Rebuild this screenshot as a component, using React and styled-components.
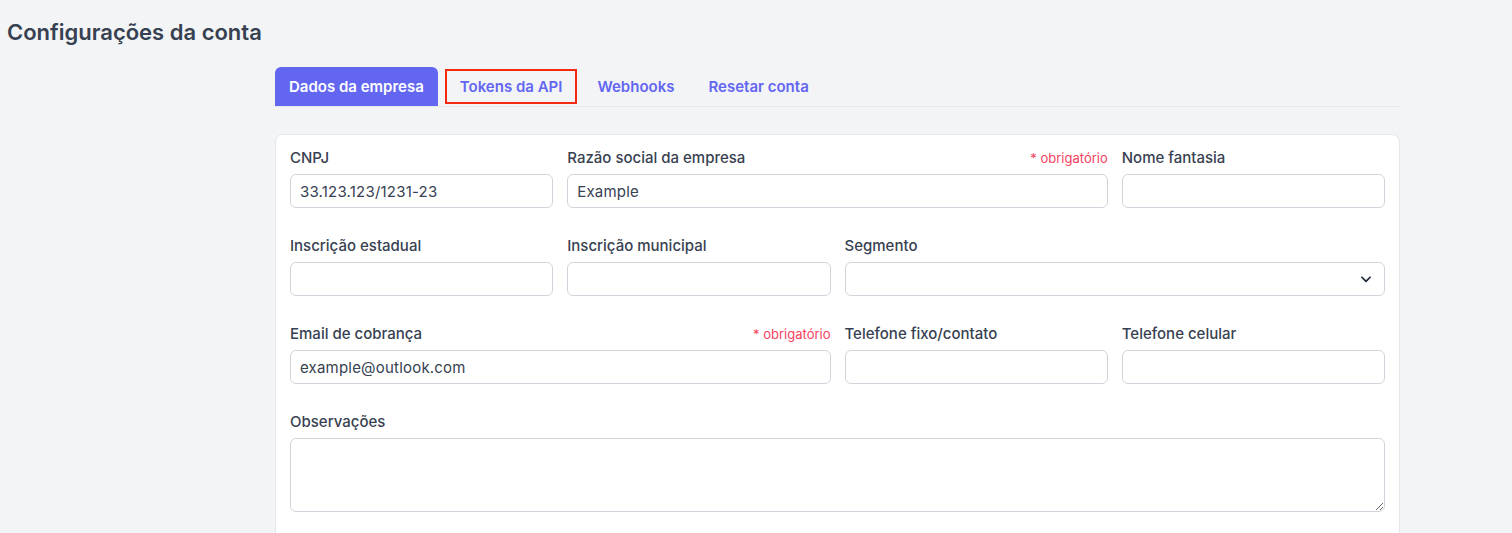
import React from "react";
import styled, { createGlobalStyle } from "styled-components";

const Global = createGlobalStyle`
  body {
    margin: 0;
    background: #f3f4f6;
    font-family: Inter, "Noto Sans", sans-serif;
    color: #374151;
  }
`;

const Page = styled.div`
  padding: 18px 7px 0;
`;

const Title = styled.h1`
  margin: 0;
  font-size: 22px;
  line-height: 28px;
  font-weight: 600;
  color: #374151;
`;

const Content = styled.div`
  margin: 21px 0 0 268px;
  width: 1125px;
`;

const TabBar = styled.div`
  display: flex;
  align-items: flex-start;
  gap: 6px;
  border-bottom: 1px solid #e5e7eb;
`;

const Tab = styled.button`
  box-sizing: border-box;
  height: ${(p) => (p.$marked ? "35px" : "39px")};
  margin: ${(p) => (p.$marked ? "2px 0 2px 1px" : "0")};
  padding: 0 ${(p) => (p.$marked ? "13px" : "14px")};
  border: ${(p) => (p.$marked ? "2px solid #f5290f" : "none")};
  border-radius: ${(p) => (p.$marked ? "0" : "6px 6px 0 0")};
  background: ${(p) => (p.$active ? "#6366f1" : "transparent")};
  color: ${(p) => (p.$active ? "#fff" : "#6366f1")};
  font-family: inherit;
  font-size: 15px;
  font-weight: 600;
  cursor: pointer;
`;

const Card = styled.div`
  margin-top: 27px;
  background: #fff;
  border: 1px solid #e5e7eb;
  border-radius: 8px;
  padding: 13px 14px 40px;
`;

const Grid = styled.div`
  display: grid;
  grid-template-columns: repeat(4, 1fr);
  column-gap: 14px;
  row-gap: 28px;
`;

const Field = styled.div`
  grid-column: span ${(p) => p.$span || 1};
  display: flex;
  flex-direction: column;
  gap: 6px;
`;

const LabelRow = styled.div`
  display: flex;
  justify-content: space-between;
  align-items: baseline;
  height: 20px;
`;

const Label = styled.label`
  font-size: 15px;
  line-height: 20px;
  font-weight: 500;
  color: #374151;
`;

const Required = styled.span`
  font-size: 13px;
  color: #f43f5e;
`;

const Input = styled.input`
  box-sizing: border-box;
  height: 34px;
  width: 100%;
  padding: 0 9px;
  border: 1px solid #d1d5db;
  border-radius: 6px;
  font-family: inherit;
  font-size: 15px;
  letter-spacing: 0.2px;
  color: #374151;
  background: #fff;
  outline: none;
`;

const SelectWrap = styled.div`
  position: relative;
`;

const Select = styled.select`
  box-sizing: border-box;
  height: 34px;
  width: 100%;
  padding: 0 10px;
  border: 1px solid #d1d5db;
  border-radius: 6px;
  background: #fff;
  appearance: none;
  font-family: inherit;
  font-size: 15px;
  outline: none;
`;

const Chevron = styled.svg`
  position: absolute;
  right: 12px;
  top: 10px;
  pointer-events: none;
`;

const TextArea = styled.textarea`
  box-sizing: border-box;
  width: 100%;
  height: 74px;
  padding: 8px 10px;
  border: 1px solid #d1d5db;
  border-radius: 6px;
  font-family: inherit;
  font-size: 15px;
  outline: none;
`;

const TextField = ({ label, required, span, value }) => (
  <Field $span={span}>
    <LabelRow>
      <Label>{label}</Label>
      {required && <Required>* obrigatório</Required>}
    </LabelRow>
    <Input defaultValue={value} />
  </Field>
);

export default function App() {
  return (
    <Page>
      <Global />
      <Title>Configurações da conta</Title>
      <Content>
        <TabBar>
          <Tab $active>Dados da empresa</Tab>
          <Tab $marked>Tokens da API</Tab>
          <Tab>Webhooks</Tab>
          <Tab>Resetar conta</Tab>
        </TabBar>
        <Card>
          <Grid>
            <TextField label="CNPJ" value="33.123.123/1231-23" />
            <TextField label="Razão social da empresa" required span={2} value="Example" />
            <TextField label="Nome fantasia" />

            <TextField label="Inscrição estadual" />
            <TextField label="Inscrição municipal" />
            <Field $span={2}>
              <LabelRow>
                <Label>Segmento</Label>
              </LabelRow>
              <SelectWrap>
                <Select defaultValue="">
                  <option value=""></option>
                </Select>
                <Chevron width="14" height="14" viewBox="0 0 24 24" fill="none" stroke="#1f2937" strokeWidth="3" strokeLinecap="round" strokeLinejoin="round">
                  <path d="M5 9l7 7 7-7" />
                </Chevron>
              </SelectWrap>
            </Field>

            <TextField label="Email de cobrança" required span={2} value="example@outlook.com" />
            <TextField label="Telefone fixo/contato" />
            <TextField label="Telefone celular" />

            <Field $span={4}>
              <LabelRow>
                <Label>Observações</Label>
              </LabelRow>
              <TextArea />
            </Field>
          </Grid>
        </Card>
      </Content>
    </Page>
  );
}
